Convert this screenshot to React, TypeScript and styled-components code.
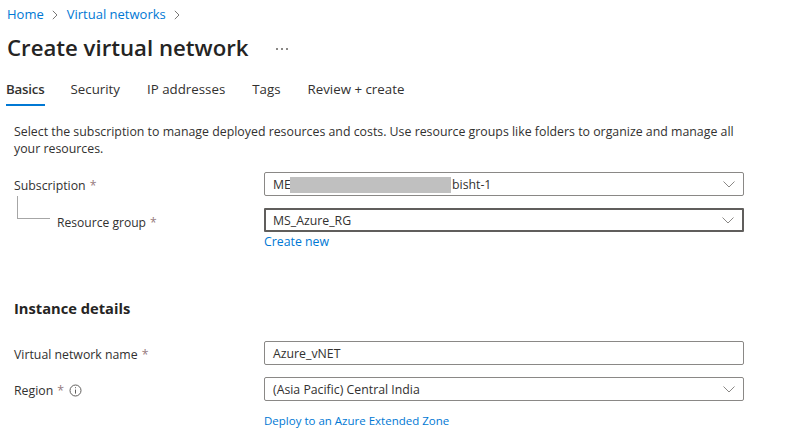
import React from "react";
import styled, { createGlobalStyle } from "styled-components";

const GlobalStyle = createGlobalStyle`
  html, body {
    margin: 0;
    padding: 0;
    background: #fff;
  }
  body {
    width: 798px;
    height: 434px;
    overflow: hidden;
    font-family: "Open Sans", "Noto Sans", sans-serif;
    font-size: 12.4px;
    color: #323130;
  }
`;

const Page = styled.div`
  display: flex;
  flex-direction: column;
  padding: 6px 0 0 6px;
`;

const Breadcrumbs = styled.nav`
  display: flex;
  align-items: center;
  height: 17px;
  padding-left: 1px;
  gap: 8.5px;
`;

const Link = styled.a<{ $compact?: boolean }>`
  color: #0078d4;
  font-size: ${({ $compact }) => ($compact ? "11.5px" : "12.3px")};
  line-height: 17px;
`;

const Crumb = styled(Link)`
  font-size: 13px;
`;

const TitleRow = styled.div`
  display: flex;
  align-items: center;
  height: 34px;
  margin-top: 8px;
`;

const Title = styled.h1`
  margin: 0 0 0 1px;
  font-size: 22.2px;
  font-weight: 600;
  line-height: 34px;
  color: #252423;
`;

const More = styled.span`
  margin-left: 27px;
  display: flex;
  gap: 3px;
  margin-top: 2px;
`;

const Dot = styled.i`
  width: 2px;
  height: 1.5px;
  background: #8a8886;
`;

const Tabs = styled.div`
  display: flex;
  gap: 27px;
  margin-top: 16px;
  height: 27px;
`;

const Tab = styled.div<{ $active?: boolean }>`
  font-size: 13.3px;
  line-height: 18px;
  margin-top: -1px;
  font-weight: ${({ $active }) => ($active ? 600 : 400)};
  letter-spacing: ${({ $active }) => ($active ? "-0.2px" : "0")};
  margin-right: ${({ $active }) => ($active ? "-1px" : "0")};
  border-bottom: 2px solid ${({ $active }) => ($active ? "#0078d4" : "transparent")};
  height: 24px;
`;

const Content = styled.div`
  padding: 15px 0 0 8px;
  display: flex;
  flex-direction: column;
`;

const Intro = styled.p`
  margin: 0;
  width: 730px;
  line-height: 17px;
  font-size: 12.35px;
`;

const Row = styled.div<{ $top: number }>`
  display: grid;
  grid-template-columns: 250px 480px;
  align-items: center;
  margin-top: ${({ $top }) => $top}px;
`;

const Label = styled.label<{ $indent?: boolean }>`
  position: relative;
  display: flex;
  align-items: center;
  gap: 5px;
  top: ${({ $indent }) => ($indent ? "2px" : "1px")};
  padding-left: ${({ $indent }) => ($indent ? "43px" : "0")};
  font-size: ${({ $indent }) => ($indent ? "12.1px" : "12.3px")};
`;

const Required = styled.span`
  color: #7d5a60;
  margin-left: 4px;
  opacity: 0.8;
`;

const Connector = styled.span`
  position: absolute;
  left: 3px;
  top: -18px;
  width: 32px;
  height: 22px;
  border-left: 1px solid #a6a6a6;
  border-bottom: 1px solid #a6a6a6;
`;

const Field = styled.div<{ $focused?: boolean }>`
  position: relative;
  box-sizing: border-box;
  height: 24px;
  display: flex;
  align-items: center;
  padding-left: 8px;
  border: 1px solid #8a8886;
  border-radius: 2px;
  font-size: 12.3px;
  ${({ $focused }) =>
    $focused &&
    `
    border: 2px solid #605e5c;
    border-radius: 1px;
    padding-left: 7px;
  `}
`;

const Mask = styled.span`
  position: absolute;
  left: 25px;
  top: 4px;
  width: 161px;
  height: 16px;
  background: #c0c0c0;
`;

const Suffix = styled.span`
  position: absolute;
  left: 187px;
`;

const Chevron = styled.svg`
  position: absolute;
  right: 8px;
  top: 50%;
  margin-top: -3px;
`;

const LinkRow = styled.div<{ $top: number }>`
  margin: ${({ $top }) => $top}px 0 0 250px;
`;

const SectionTitle = styled.h2`
  margin: 48px 0 0;
  font-size: 14.7px;
  line-height: 20px;
  font-weight: 700;
  color: #252423;
`;

function Caret() {
  return (
    <Chevron width="12" height="7" viewBox="0 0 12 7" fill="none">
      <path d="M0.5 0.5L6 6L11.5 0.5" stroke="#8a8886" strokeWidth="1" />
    </Chevron>
  );
}

function Sep() {
  return (
    <svg width="6" height="10" viewBox="0 0 6 10" fill="none">
      <path d="M0.8 0.8L5 5L0.8 9.2" stroke="#797775" strokeWidth="1" />
    </svg>
  );
}

function InfoIcon() {
  return (
    <svg width="13" height="13" viewBox="0 0 13 13" fill="none">
      <circle cx="6.5" cy="6.5" r="5.5" stroke="#605e5c" strokeWidth="1" />
      <path d="M6.5 5.6V9.6" stroke="#605e5c" strokeWidth="1" />
      <rect x="6" y="3.2" width="1" height="1" fill="#605e5c" />
    </svg>
  );
}

export default function App() {
  return (
    <Page>
      <GlobalStyle />
      <Breadcrumbs>
        <Crumb>Home</Crumb>
        <Sep />
        <Crumb>Virtual networks</Crumb>
        <Sep />
      </Breadcrumbs>
      <TitleRow>
        <Title>Create virtual network</Title>
        <More>
          <Dot />
          <Dot />
          <Dot />
        </More>
      </TitleRow>
      <Tabs>
        <Tab $active>Basics</Tab>
        <Tab>Security</Tab>
        <Tab>IP addresses</Tab>
        <Tab>Tags</Tab>
        <Tab>Review + create</Tab>
      </Tabs>
      <Content>
        <Intro>
          Select the subscription to manage deployed resources and costs. Use resource groups like
          folders to organize and manage all your resources.
        </Intro>
        <Row $top={15}>
          <Label>
            <span>
              Subscription<Required>*</Required>
            </span>
          </Label>
          <Field>
            ME
            <Mask />
            <Suffix>bisht-1</Suffix>
            <Caret />
          </Field>
        </Row>
        <Row $top={12}>
          <Label $indent>
            <Connector />
            <span>
              Resource group<Required>*</Required>
            </span>
          </Label>
          <Field $focused>
            MS_Azure_RG
            <Caret />
          </Field>
        </Row>
        <LinkRow $top={1}>
          <Link>Create new</Link>
        </LinkRow>
        <SectionTitle>Instance details</SectionTitle>
        <Row $top={23}>
          <Label>
            <span>
              Virtual network name<Required>*</Required>
            </span>
          </Label>
          <Field>Azure_vNET</Field>
        </Row>
        <Row $top={12}>
          <Label>
            <span>
              Region<Required>*</Required>
            </span>
            <InfoIcon />
          </Label>
          <Field>
            (Asia Pacific) Central India
            <Caret />
          </Field>
        </Row>
        <LinkRow $top={11}>
          <Link $compact>Deploy to an Azure Extended Zone</Link>
        </LinkRow>
      </Content>
    </Page>
  );
}
